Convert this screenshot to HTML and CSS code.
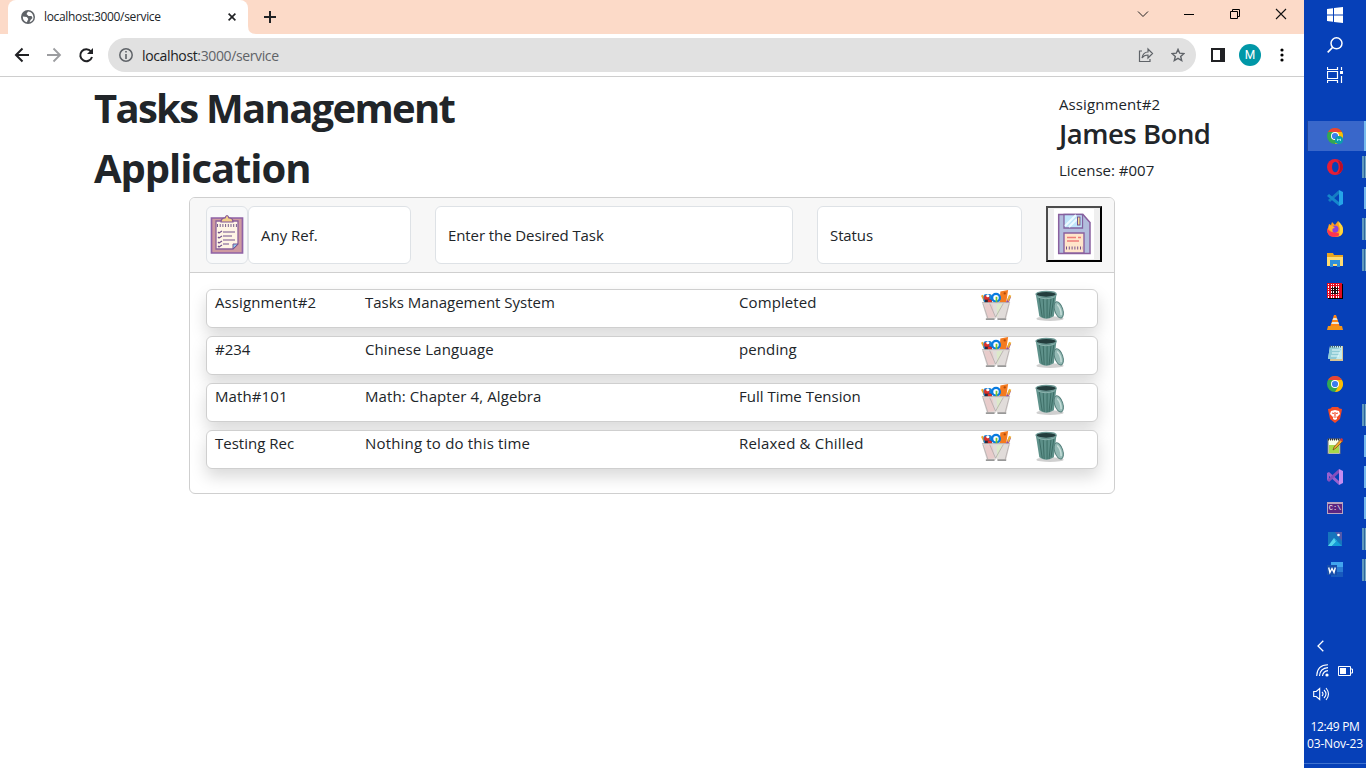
FILE: index.html
```html
<!DOCTYPE html>
<html lang="en">
<head>
<meta charset="utf-8">
<title>Tasks Management Application</title>
<link rel="stylesheet" href="styles.css">
</head>
<body>
<svg class="defs" aria-hidden="true">
  <symbol id="pens" viewBox="0 0 32 32">
    <path d="M19 13 20 1.500l8-1.500-2 13z" fill="#f47b20"/><circle cx="24.500" cy="3.500" r="1.200" fill="#b34b08"/>
    <path d="m25 14 4-8 2 1-3 8z" fill="#9a4a9c"/><path d="m27 10 2-5 2.300 1-3 6z" fill="#efb032"/>
    <path d="m0 6 2-1 4 9H4z" fill="#f5a623"/><rect x="2.500" y="4" width="9" height="9" rx="3" fill="#1785d8"/>
    <circle cx="6" cy="8" r="2.800" fill="#df3128"/><circle cx="7" cy="6" r="1.600" fill="#fff"/><path d="M4 10h7v4H4z" fill="#312938"/><path d="M7 10h4v4H7z" fill="#e42d27"/>
    <circle cx="15.500" cy="8" r="4" fill="#fff" stroke="#087be0" stroke-width="2.400"/>
    <path d="M16 7v9" stroke="#78c52e" stroke-width="1.800"/>
    <path d="M1 13h29l-4 17h-9l-1-2-1 2H6z" fill="#e1dcda"/>
    <path d="m3 14 9 1 2 13-7 1z" fill="#e8cccb"/><path d="m16 15 6-1-5 14z" fill="#dce9c9"/>
    <path d="m9 14 6 14 8-14M1 13h29M2 14l5 15m22-15-4 15" fill="none" stroke="#b0aaaa" stroke-width=".8"/>
    <path d="M5 30h9m3 0h9" stroke="#777" stroke-width="1.300"/>
  </symbol>
  <symbol id="bin" viewBox="0 0 32 34">
    <ellipse cx="16" cy="29.500" rx="14" ry="2.500" fill="#777" opacity=".35"/>
    <path d="M1.500 5h21l-2.500 22q-8 5-15 0z" fill="#5e918a"/><path d="m5 8 3 20m1-19 1 20m3-20v20m4-20-2 20m5-21-3 19" stroke="#3c6c65" stroke-width="1"/>
    <ellipse cx="12" cy="4.500" rx="10.500" ry="3" fill="#243d3d" stroke="#6d9995" stroke-width="1.200"/>
    <path d="M3 7q9 4 18 0" fill="none" stroke="#8db4ae"/>
    <ellipse cx="25" cy="20.500" rx="4.200" ry="8.700" transform="rotate(-18 25 20.500)" fill="#93b9b4" stroke="#527d79"/>
    <path d="M23.500 15q4 4 4 11" fill="none" stroke="#c9dfdb" stroke-width="1.500"/>
  </symbol>
  <symbol id="chrome" viewBox="0 0 16 16">
    <circle cx="8" cy="8" r="8" fill="#33a852"/><path d="M1.070 4A8 8 0 0 1 14.930 4H8v5z" fill="#ea4335"/>
    <path d="M14.930 4A8 8 0 0 1 8 16l3.500-6L8 4z" fill="#fbbc04"/><path d="M1.070 4 4.540 10 8 8V4z" fill="#33a852"/>
    <circle cx="8" cy="8" r="4" fill="#fff"/><circle cx="8" cy="8" r="3.100" fill="#3b7ded"/>
  </symbol>
</svg>
<div class="screen">
  <main class="browser">
    <header class="tabs">
      <div class="tab">
        <svg width="14" height="14" viewBox="0 0 14 14"><circle cx="7" cy="7" r="7" fill="#5f6368"/><path d="M7 1.500 5.500 4l2 2h3l1 2-2 2-1 2.300q4-1 4-5Q12 2 7 1.500M1.800 6.500l4 .5 1.500 2-1.500 3.200q-4-1.200-4-5.700" fill="#fff"/></svg>
        <span class="tab-title">localhost:3000/service</span>
        <svg class="tab-x" width="8" height="8" viewBox="0 0 8 8"><path d="m.6.6 6.800 6.800m0-6.800L.6 7.400" stroke="#202124" stroke-width="1.600"/></svg>
      </div>
      <svg class="tab-foot" width="8" height="8" viewBox="0 0 8 8"><path d="M0 0v8h8Q0 8 0 0" fill="#fff"/></svg>
      <svg class="plus" width="12" height="12" viewBox="0 0 12 12"><path d="M6 0v12M0 6h12" stroke="#202124" stroke-width="2"/></svg>
      <div class="window-controls">
        <svg width="12" height="12" viewBox="0 0 12 12"><path d="m1 3.500 5 5 5-5" fill="none" stroke="#222"/></svg>
        <svg width="12" height="12" viewBox="0 0 12 12"><path d="M1 6.500h10" stroke="#000"/></svg>
        <svg width="12" height="12" viewBox="0 0 12 12"><path d="M1.500 3.500h7v7h-7zM3.500 3V1.500h7v7H9" fill="none" stroke="#000"/></svg>
        <svg width="12" height="12" viewBox="0 0 12 12"><path d="m1 1 10 10m0-10L1 11" stroke="#111" stroke-width="1.100"/></svg>
      </div>
    </header>
    <nav class="toolbar">
      <svg width="16" height="16" viewBox="0 0 16 16"><path d="M15 8H2m6.500-6.500L2 8l6.500 6.500" fill="none" stroke="#202124" stroke-width="2"/></svg>
      <svg width="16" height="16" viewBox="0 0 16 16"><path d="M1 8h13M7.500 1.500 14 8l-6.500 6.500" fill="none" stroke="#9c9da0" stroke-width="1.800"/></svg>
      <svg width="16" height="16" viewBox="0 0 16 16"><path d="M13 4.500A6 6 0 1 0 14 10" fill="none" stroke="#202124" stroke-width="2"/><path d="M15 1v6H9z" fill="#202124"/></svg>
      <div class="address">
        <svg width="14" height="14" viewBox="0 0 14 14"><circle cx="7" cy="7" r="6.200" fill="none" stroke="#5f6368" stroke-width="1.500"/><path d="M7 3v1.600M7 6v5" stroke="#5f6368" stroke-width="1.600"/></svg>
        <span class="url"><b>localhost</b>:3000/service</span>
        <svg class="share" width="16" height="16" viewBox="0 0 16 16"><path d="M4 4H1.500v10.500H12V12M4 11q1-6 6-6V2l4.500 4.500L10 11V8Q6 8 4 11z" fill="none" stroke="#5f6368" stroke-width="1.200"/></svg>
        <svg width="14" height="14" viewBox="0 0 14 14"><path d="m7 1.400 1.700 3.800 4.200.4-3.200 2.800 1 4.100L7 10.300l-3.700 2.200 1-4.100L1.100 5.600l4.200-.4z" fill="none" stroke="#5f6368" stroke-width="1.400"/></svg>
      </div>
      <svg class="panel" width="14" height="14" viewBox="0 0 14 14"><path d="M1 1h12v12H1z" fill="none" stroke="#202124" stroke-width="2"/><path d="M9 1h5v12H9z" fill="#202124"/></svg>
      <span class="avatar">M</span>
      <svg class="kebab" width="4" height="14" viewBox="0 0 4 14"><circle cx="2" cy="2" r="1.600"/><circle cx="2" cy="7" r="1.600"/><circle cx="2" cy="12" r="1.600"/></svg>
    </nav>
    <section class="page">
      <div class="intro">
        <h1><span class="h-one">Tasks Management</span><br><span class="h-two">Application</span></h1>
        <div class="owner"><p class="o-top">Assignment#2</p><h2>James Bond</h2><p>License: #007</p></div>
      </div>
      <div class="card">
        <div class="form">
          <div class="clip"><svg width="34" height="40" viewBox="0 0 34 40">
            <path d="M1.500 4h31v35h-31z" fill="#ce9aa0" stroke="#8f62a5" stroke-width="1.700"/><path d="M6 7h22v23l-5 5H6z" fill="#fff5e5" stroke="#8b609b" stroke-width="1.300"/>
            <path d="M23 35v-5h5z" fill="#8ccaf1" stroke="#775493"/><path d="M11 8q0-4 4-4 2-5 4 0 4 0 4 4z" fill="#f3cf88" stroke="#815697" stroke-width="1.200"/>
            <path d="M7 11.500h20" stroke="#775e8b" stroke-width="3" stroke-dasharray="1 1.700"/><path d="m8 18 1 1 3-2m-4 6 1 1 3-2m-4 6 1 1 3-2m-4 5 1 1 3-2M13 18h12M13 22h9M13 26h12M13 30h6" fill="none" stroke="#72538d" stroke-width="1.200"/></svg></div>
          <div class="field f-ref"><span>Any Ref.</span></div>
          <div class="field f-task"><span>Enter the Desired Task</span></div>
          <div class="field f-status"><span>Status</span></div>
          <button class="save" aria-label="Save"><svg width="40" height="50" viewBox="0 0 40 50"><path d="M0 0h40v50H0z" fill="#fff"/>
            <path d="M4.700 5.500H29l7 8v31H4.700z" fill="#b2bddd" stroke="#8a609f" stroke-width="1.500"/><path d="M10 5.500h18.500V19H10z" fill="#bfe5fa" stroke="#8262a0" stroke-width="1.300"/><path d="m11 17 11-11m-7 12 8-8" stroke="#ecfaff" stroke-width="2"/>
            <rect x="23.500" y="8" width="2.500" height="8" fill="#f7dc8d" stroke="#76528b"/><path d="M10 24h20v20H10z" fill="#ffe5ca" stroke="#8a609f" stroke-width="1.400"/><path d="M13 28.500h9m2 0h3m-14 3.500h12" stroke="#ee7c79" stroke-width="1.600"/><path d="M12 39h17" stroke="#76528b" stroke-width="3" stroke-dasharray="1 1.800"/></svg></button>
        </div>
        <div class="rows">
          <div class="row"><span class="wide">Assignment#2</span><span>Tasks Management System</span><span class="wide">Completed</span><svg class="pens"><use href="#pens"/></svg><svg class="bin"><use href="#bin"/></svg></div>
          <div class="row"><span>#234</span><span class="wide">Chinese Language</span><span class="wide">pending</span><svg class="pens"><use href="#pens"/></svg><svg class="bin"><use href="#bin"/></svg></div>
          <div class="row"><span class="wide">Math#101</span><span class="wide">Math: Chapter 4, Algebra</span><span>Full Time Tension</span><svg class="pens"><use href="#pens"/></svg><svg class="bin"><use href="#bin"/></svg></div>
          <div class="row"><span>Testing Rec</span><span class="wider">Nothing to do this time</span><span class="wider">Relaxed &amp; Chilled</span><svg class="pens"><use href="#pens"/></svg><svg class="bin"><use href="#bin"/></svg></div>
        </div>
      </div>
    </section>
  </main>
  <aside class="taskbar">
    <div class="system">
      <svg viewBox="0 0 16 16"><path d="m0 2 6-.8v6.300H0zm7-.9L16 0v7.500H7zM0 8.500h6v6.300L0 14zm7 0h9V16l-9-1z" fill="#fff"/></svg>
      <svg viewBox="0 0 16 16"><circle cx="9.500" cy="6.300" r="5.500" fill="none" stroke="#fff" stroke-width="1.500"/><path d="M5.500 10.500.7 15.300" stroke="#fff" stroke-width="1.700"/></svg>
      <svg viewBox="0 0 16 16"><path d="M.5 0v2.500h10V0M.5 4.500h10v7H.5zM.5 16v-2.500h10V16M14.500 0v3m0 6v7" fill="none" stroke="#fff" stroke-width="1.200"/><path d="M13 4h3v3h-3z" fill="#fff"/></svg>
    </div>
    <div class="apps">
      <div class="app active one"><svg viewBox="0 0 16 16"><use href="#chrome" width="16" height="16"/><circle cx="12" cy="12" r="4" fill="#0b9eac"/><path d="M10.500 13v-2l1.500 1 1.500-1v2" fill="none" stroke="#b5eef0" stroke-width=".8"/></svg></div>
      <div class="app many"><svg viewBox="0 0 16 16"><circle cx="8" cy="8" r="8" fill="#e51e36"/><path d="M10 1q6 2 6 7t-6 7q3-2 3-7t-3-7" fill="#b60e29"/><ellipse cx="8.300" cy="8" rx="3.300" ry="5.300" fill="#0743b5"/></svg></div>
      <div class="app one"><svg viewBox="0 0 16 16"><path d="M12 0v4L3 12l-2-2z" fill="#157cc2"/><path d="m0 6 2-2 10 8v4z" fill="#1587cc"/><path d="m12 0 4 2v12l-4 2z" fill="#25a5e8"/></svg></div>
      <div class="app many"><svg viewBox="0 0 16 16"><path d="M2 3 4 4l1-3 3 3 3-4 2 5 2-1q4 12-7 12Q-2 15 1 7z" fill="#ff9c1c"/><path d="M0 7q3 5 8 4l5 2q-2 3-6 3Q0 16 0 7z" fill="#ff354e"/><circle cx="8" cy="8" r="3.500" fill="#8a40df"/><path d="M2 5q4-1 6 2-4 0-2 4-4-1-4-6" fill="#ffb12b"/><path d="M11 0q5 4 5 9t-4 6l1-7z" fill="#ffd83b"/></svg></div>
      <div class="app many"><svg viewBox="0 0 16 16"><path d="M0 1h6l1 2h9v4H0z" fill="#eaa51f"/><path d="M0 5h16v9H0z" fill="#ffdc72"/><path d="M3 8h10v7h-3v-3H6v3H3z" fill="#2f91db"/></svg></div>
      <div class="app"><svg viewBox="0 0 16 16" shape-rendering="crispEdges"><path d="M1 1h15v15H1z"/><path d="M0 0h15v15H0z" fill="#e10d20"/><path d="M4 4h7v7H4z" fill="#250b0b"/><path d="M1 1.500h13M1 4h13M1 6.500h13M1 9h13M1 11.500h13M1 14h13" stroke="#fff" stroke-width="1.200" stroke-dasharray="1.300 1.200"/></svg></div>
      <div class="app"><svg viewBox="0 0 16 16"><path d="m7 1 2 0 4 12H3z" fill="#ff8615"/><path d="m5.500 6 1-2h3l1 2zm-1.300 4 1-2h6l1 2z" fill="#e7e7df"/><path d="M1 12h14l1 4H0z" fill="#f49419"/></svg></div>
      <div class="app"><svg viewBox="0 0 16 16"><path d="M4 1h12v15H3z" fill="#d8c492"/><path d="M3 1h12v13H1z" fill="#c5edf1"/><path d="M3 1 1 14h8l5-10" fill="#8fcbd5"/><path d="M3 1.500h12" stroke="#47626b" stroke-width="2" stroke-dasharray="1 1"/><path d="M5 5h8M5 8h8M4 11h8" stroke="#e8fcfc"/></svg></div>
      <div class="app"><svg><use href="#chrome"/></svg></div>
      <div class="app many"><svg viewBox="0 0 16 16"><path d="m5 0 6 0 1.500 1.500L15 2l-.5 3L13 12l-5 4-5-4L1.500 5 1 2l2.500-.5z" fill="#f34a25"/><path d="m4 4 4-1 4 1 1 3-3 3v2l-2 1-2-1v-2L3 7z" fill="#fff"/><path d="m5 6 2 .5m4-.5L9 6.500M8 5v4m-1.500 1h3" stroke="#f34a25" stroke-width="1.200"/></svg></div>
      <div class="app one"><svg viewBox="0 0 16 16"><path d="M1 1h12v15H1z" fill="#f9ffe8" stroke="#777"/><path d="M2 7h10v8H2z" fill="#a6d849"/><path d="M1 1.500h12" stroke="#333" stroke-width="2" stroke-dasharray="1 1"/><path d="m6 12 1-3 7-8 2 2-7 7z" fill="#efa72d" stroke="#593b19" stroke-width=".6"/><path d="m13 2 1-2 2 1-1 3z" fill="#cf343e"/></svg></div>
      <div class="app one"><svg viewBox="0 0 16 16"><path d="m0 4 2-1 10 9v4L2 7v5l-2-1z" fill="#9960ce"/><path d="M12 0v4L2 13l-2-2z" fill="#854ebc"/><path d="m12 0 4 2v12l-4 2z" fill="#c58cf0"/></svg></div>
      <div class="app one"><div class="terminal">C:\</div></div>
      <div class="app many"><svg viewBox="0 0 16 16"><path d="M1 1h14v14H1z" fill="#1675bd"/><path d="M8 1h7v9z" fill="#5459a9"/><path d="m1 15 6-8 3 3-5 5z" fill="#53d4ed"/><path d="m7 7 8 8H5l4-4z" fill="#139ed8"/><circle cx="11.500" cy="4" r="1.300" fill="#fff"/></svg></div>
      <div class="app many"><svg viewBox="0 0 16 16"><path d="M4 0h12v5H4z" fill="#42a5ee"/><path d="M4 5h12v5H4z" fill="#2b7cd3"/><path d="M4 10h12v5H4z" fill="#185abd"/><path d="M0 3h10v10H0z" fill="#174eaa"/><path d="m1.700 5.500 1.200 5L5 6.500l2 4 1.300-5" fill="none" stroke="#fff" stroke-width="1.400"/></svg></div>
    </div>
    <div class="tray">
      <svg class="chev" width="7" height="12" viewBox="0 0 7 12"><path d="M6.300.7 1 6l5.300 5.300" fill="none" stroke="#fff" stroke-width="1.300"/></svg>
      <div class="signals"><svg width="13" height="13" viewBox="0 0 13 13"><path d="M.7 12Q1 1 12 .8M3.500 12Q4 4 12 3.600M6.500 12Q7 7 12 6.600" fill="none" stroke="#fff" stroke-width="1.100"/><circle cx="11" cy="11" r="1.600" fill="#fff"/></svg>
      <svg width="15" height="10" viewBox="0 0 15 10"><path d="M.5.500h12v9H.5zM12.500 3h2v4h-2" fill="none" stroke="#fff"/><path d="M2 2h6v6H2z" fill="#fff"/></svg></div>
      <svg class="volume" width="17" height="14" viewBox="0 0 17 14"><path d="M.7 4.500h2.500l3.500-3v11l-3.500-3H.7zM9 5q2 2 0 4m2-6q4 4 0 8m2-10q5 6 0 12" fill="none" stroke="#fff" stroke-width="1.100"/></svg>
      <div class="clock"><span class="time">12:49 PM</span><span>03-Nov-23</span></div>
    </div>
  </aside>
</div>
</body>
</html>
```
FILE: styles.css
```css
* { box-sizing: border-box; }
body { margin: 0; font-family: "Open Sans", "Noto Sans", sans-serif; color: #212529; background: #fff; overflow: hidden; }
svg { display: block; flex: none; }
.defs { display: none; }
.screen { display: grid; grid-template-columns: 1304px 62px; height: 768px; }
.tabs { display: flex; height: 34px; background: #fcdac8; padding-left: 8px; }
.tab { width: 240px; display: flex; align-items: center; background: #fff; border-radius: 8px 8px 0 0; padding: 0 12px 0 13px; }
.tab-title { font-size: 12px; margin: -1px 0 0 9px; letter-spacing: -.34px; white-space: nowrap; }
.tab-x { margin-left: auto; }
.tab-foot { align-self: flex-end; }
.plus { margin: 11px 0 0 8px; }
.window-controls { display: flex; gap: 34px; margin: 8px 17px 0 auto; }
.toolbar { display: flex; align-items: center; height: 43px; padding: 0 20px 0 14px; gap: 16px; border-bottom: 1px solid #cecece; }
.address { width: 1088px; height: 34px; border-radius: 17px; background: #e1e1e1; display: flex; align-items: center; padding: 0 11px; margin-left: -2px; }
.url { color: #5f6368; font-size: 14px; margin-left: 9px; letter-spacing: -.37px; }
.url b { font-weight: 400; color: #202124; }
.share { margin-left: auto; margin-right: 17px; }
.panel { margin-left: -1px; }
.avatar { width: 22px; height: 22px; border-radius: 50%; background: #0097a7; color: #fff; font: 12px/22px Roboto, sans-serif; text-align: center; margin: 0 -2px; }
.kebab { margin-left: 5px; }
.page { padding: 2px 94px 0; }
.intro { display: flex; justify-content: space-between; height: 118px; }
h1 { margin: -1px 0 0; font-size: 40px; line-height: 60px; font-weight: 700; white-space: nowrap; }
.h-one { letter-spacing: -1.700px; }
.h-two { letter-spacing: -1.050px; }
.owner { width: 151px; padding-top: 13px; white-space: nowrap; font-size: 15px; }
.owner p { margin: 0; line-height: 24px; }
.owner .o-top { letter-spacing: .1px; }
h2 { margin: 1px 0 7px; font-size: 27.500px; line-height: 34px; font-weight: 600; letter-spacing: -.480px; }
.card { width: 926px; height: 297px; margin-left: 95px; border: 1px solid #cfcfcf; border-radius: 6px; overflow: hidden; }
.form { display: flex; height: 75px; padding: 8px 12px 0 16px; background: #f7f7f7; border-bottom: 1px solid #cfcfcf; }
.clip { width: 42px; height: 58px; border: 1px solid #dee2e6; border-radius: 6px; background: #f8f9fa; display: flex; align-items: center; justify-content: center; padding-bottom: 3px; }
.field { height: 58px; border: 1px solid #dee2e6; border-radius: 6px; background: #fff; padding-left: 12px; display: flex; align-items: center; font-size: 15px; white-space: nowrap; margin-right: 24px; }
.f-ref { width: 163px; }
.f-task { width: 358px; letter-spacing: -.09px; }
.f-status { width: 205px; letter-spacing: -.1px; }
.save { width: 56px; height: 56px; padding: 0; border: 2px solid #000; border-color: #4c4c4c #000 #000 #4c4c4c; background: #efefef; display: flex; align-items: center; justify-content: center; }
.rows { padding: 16px 16px 0; display: grid; gap: 8px; }
.row { width: 892px; height: 39px; display: grid; grid-template-columns: 150px 374px 242px 53px 40px; align-items: start; padding-left: 8px; border: 1px solid #cfcfcf; border-radius: 6px; background: #fff; box-shadow: 0 8px 16px rgba(0,0,0,.15); font-size: 15px; line-height: 25px; white-space: nowrap; }
.row span { justify-self: start; }
.wide { letter-spacing: .1px; }
.wider { letter-spacing: .18px; }
.pens { width: 31px; height: 31px; }
.bin { width: 32px; height: 33px; }
.taskbar { background: #0640b8; display: flex; flex-direction: column; color: #fff; }
.system { height: 121px; display: grid; grid-auto-rows: 30px; place-items: center; align-content: start; }
.system svg, .app svg { width: 16px; height: 16px; }
.apps { display: grid; grid-auto-rows: 30px; row-gap: 1px; }
.app { display: flex; align-items: center; justify-content: center; background-repeat: no-repeat; background-position: right center; }
.one { background-image: linear-gradient(#76b9ed, #76b9ed); background-size: 2px 22px; }
.many { background-image: linear-gradient(90deg, #6098bd 0 2px, #2c689f 2px 3px, #76a9c7 3px); background-size: 4px 22px; }
.active { margin-left: 3px; padding-right: 4px; background-color: #3967ca; background-size: 2px 30px; border-left: 1px solid #1d459b; }
.terminal { width: 16px; height: 12px; border: 1px solid #b8a4bf; border-top-width: 2px; background: #5b2581; font: 7px/9px "Liberation Mono", monospace; text-align: center; }
.tray { margin-top: auto; height: 128px; }
.chev { margin-left: 13px; }
.signals { display: flex; gap: 9px; margin: 12px 0 0 12px; align-items: center; }
.volume { margin: 10px 0 0 9px; }
.clock { display: flex; flex-direction: column; align-items: center; font-size: 12px; line-height: 17px; margin-top: 17px; padding-bottom: 11px; border-bottom: 1px solid #3e72d0; white-space: nowrap; letter-spacing: -.16px; }
.time { letter-spacing: -.35px; }
```
